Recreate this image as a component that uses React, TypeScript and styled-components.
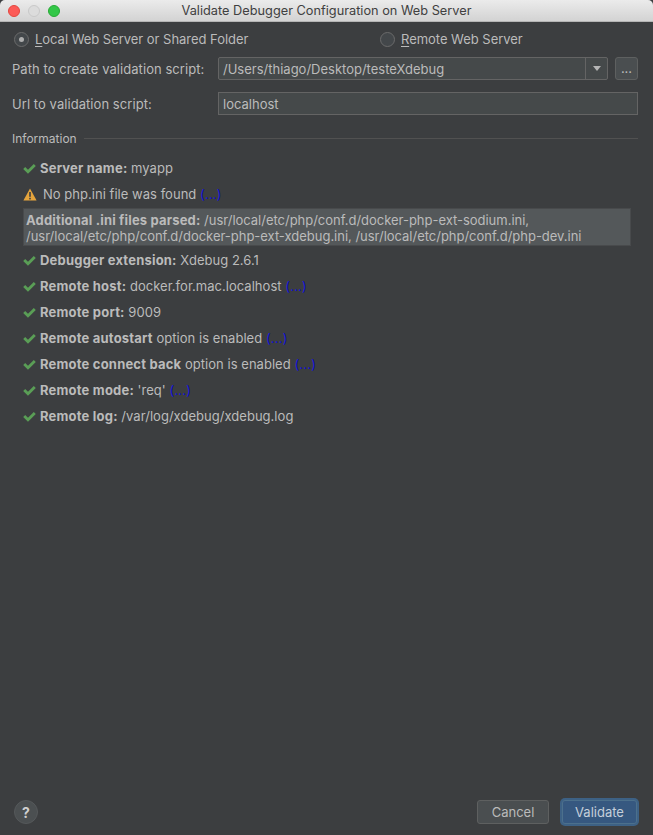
import React from "react";
import styled, { createGlobalStyle } from "styled-components";

const Global = createGlobalStyle`
  html, body { margin: 0; padding: 0; background: #3c3f41; }
  * { box-sizing: border-box; }
`;

const Window = styled.div`
  width: 653px;
  height: 835px;
  display: flex;
  flex-direction: column;
  background: #3c3e40;
  color: #bbbbbb;
  font-family: Inter, "Liberation Sans", sans-serif;
  font-size: 13px;
  overflow: hidden;
`;

const TitleBar = styled.div`
  height: 22px;
  flex: none;
  position: relative;
  display: flex;
  align-items: center;
  justify-content: center;
  background: linear-gradient(#ebebeb, #d3d3d3);
  border-bottom: 1px solid #b5b5b5;
  border-radius: 5px 5px 0 0;
  color: #404040;
  font-size: 12.75px;
`;

const Lights = styled.div`
  position: absolute;
  left: 8px;
  top: 5px;
  display: flex;
  gap: 8px;
`;

const Light = styled.span<{ $c: string; $b: string }>`
  width: 12px;
  height: 12px;
  border-radius: 50%;
  background: ${(p) => p.$c};
  border: 1px solid ${(p) => p.$b};
`;

const Content = styled.div`
  flex: 1;
  display: flex;
  flex-direction: column;
  padding: 0 15px 0 12px;
`;

const RadioRow = styled.div`
  display: grid;
  grid-template-columns: 366px 1fr;
  padding: 8px 0 0 2px;
  height: 35px;
`;

const Radio = styled.label`
  display: flex;
  align-items: center;
  gap: 6px;
  height: 18px;
  letter-spacing: -0.03px;
`;

const RadioDot = styled.span<{ $on?: boolean }>`
  width: 15px;
  height: 15px;
  border-radius: 50%;
  background: #43474a;
  border: 1px solid #6b6b6b;
  display: flex;
  align-items: center;
  justify-content: center;
  &::after {
    content: "";
    display: ${(p) => (p.$on ? "block" : "none")};
    width: 5px;
    height: 5px;
    border-radius: 50%;
    background: #aeaeae;
  }
`;

const Key = styled.span`
  text-decoration: underline;
  text-underline-offset: 2px;
`;

const FormRow = styled.div`
  display: flex;
  align-items: center;
  height: 23px;
  margin-bottom: 12px;
`;

const FormLabel = styled.div`
  width: 206px;
  flex: none;
  padding-top: 1px;
  letter-spacing: 0.06px;
`;

const Combo = styled.div`
  width: 390px;
  height: 23px;
  display: flex;
  background: #45494a;
  border: 1px solid #646464;
  border-radius: 2px;
`;

const ComboText = styled.div`
  flex: 1;
  padding-left: 4px;
  line-height: 23px;
`;

const ComboArrow = styled.div`
  width: 22px;
  border-left: 1px solid #646464;
  display: flex;
  align-items: center;
  justify-content: center;
  &::after {
    content: "";
    border-left: 4px solid transparent;
    border-right: 4px solid transparent;
    border-top: 5px solid #b5b5b5;
  }
`;

const Browse = styled.div`
  width: 23px;
  height: 23px;
  margin-left: 7px;
  background: #4a4e50;
  border: 1px solid #5e6060;
  border-radius: 3px;
  text-align: center;
  line-height: 21px;
`;

const Field = styled.div`
  width: 420px;
  height: 23px;
  background: #45494a;
  border: 1px solid #646464;
  padding-left: 4px;
  line-height: 23px;
`;

const SectionHead = styled.div`
  display: flex;
  align-items: center;
  gap: 7px;
  margin-top: 2px;
  height: 18px;
  font-size: 12px;
  &::after {
    content: "";
    flex: 1;
    height: 1px;
    background: #515151;
  }
`;

const List = styled.div`
  display: flex;
  flex-direction: column;
  padding: 8px 0 0 11px;
`;

const Item = styled.div`
  height: 26px;
  display: flex;
  align-items: center;
  white-space: pre;
  letter-spacing: 0.03px;
  b {
    letter-spacing: 0.2px;
  }
`;

const IconSlot = styled.span<{ $w: number }>`
  width: ${(p) => p.$w}px;
  flex: none;
  display: flex;
  align-items: center;
`;

const More = styled.span`
  color: #1010d8;
  letter-spacing: 0.2px;
`;

const Highlight = styled.div`
  width: 608px;
  height: 38px;
  margin: 1px 0 1px 0;
  padding: 3px 2px;
  background: #54585a;
  border: 1px solid #484a4c;
  line-height: 16px;
  white-space: pre;
  letter-spacing: -0.02px;
  b {
    letter-spacing: 0.17px;
  }
`;

const Footer = styled.div`
  margin-top: auto;
  height: 50px;
  flex: none;
  display: flex;
  align-items: center;
  padding: 4px 16px 0 14px;
`;

const Help = styled.div`
  width: 24px;
  height: 24px;
  border-radius: 50%;
  background: #4b4f51;
  border: 1px solid #55585a;
  color: #d0d0d0;
  font-weight: 700;
  font-size: 14px;
  display: flex;
  align-items: center;
  justify-content: center;
`;

const Spacer = styled.div`
  flex: 1;
`;

const Btn = styled.div<{ $primary?: boolean }>`
  height: 24px;
  display: flex;
  align-items: center;
  justify-content: center;
  border-radius: 3px;
  width: ${(p) => (p.$primary ? "75px" : "72px")};
  margin-left: ${(p) => (p.$primary ? "13px" : "0")};
  background: ${(p) => (p.$primary ? "#365880" : "#4a4e50")};
  border: 1px solid ${(p) => (p.$primary ? "#4c708c" : "#5e6060")};
  box-shadow: ${(p) => (p.$primary ? "0 0 0 2px #3d6185" : "none")};
  color: ${(p) => (p.$primary ? "#c5cfda" : "#bbbbbb")};
`;

const Check = () => (
  <svg width="13" height="11" viewBox="0 0 13 11">
    <path d="M1.2 5 L5 8.8 L11.8 2" fill="none" stroke="#5a9e56" strokeWidth="2.8" />
  </svg>
);

const Warn = () => (
  <svg width="14" height="13" viewBox="0 0 14 13">
    <path d="M7 0.5 L13.6 12.5 L0.4 12.5 Z" fill="#e5a43c" />
    <rect x="6.2" y="4" width="1.6" height="4.8" fill="#3c3f41" />
    <rect x="6.2" y="9.8" width="1.6" height="1.6" fill="#3c3f41" />
  </svg>
);

const OkItem = ({ children }: { children: React.ReactNode }) => (
  <Item>
    <IconSlot $w={17}><Check /></IconSlot>
    <span>{children}</span>
  </Item>
);

export default function App() {
  return (
    <Window>
      <Global />
      <TitleBar>
        <Lights>
          <Light $c="#fc5b57" $b="#e3473f" />
          <Light $c="#dcdcdc" $b="#c9c9c9" />
          <Light $c="#33c748" $b="#27aa35" />
        </Lights>
        Validate Debugger Configuration on Web Server
      </TitleBar>
      <Content>
        <RadioRow>
          <Radio><RadioDot $on /><span><Key>L</Key>ocal Web Server or Shared Folder</span></Radio>
          <Radio><RadioDot /><span><Key>R</Key>emote Web Server</span></Radio>
        </RadioRow>
        <FormRow>
          <FormLabel>Path to create validation script:</FormLabel>
          <Combo>
            <ComboText>/Users/thiago/Desktop/testeXdebug</ComboText>
            <ComboArrow />
          </Combo>
          <Browse>...</Browse>
        </FormRow>
        <FormRow>
          <FormLabel>Url to validation script:</FormLabel>
          <Field>localhost</Field>
        </FormRow>
        <SectionHead>Information</SectionHead>
        <List>
          <OkItem><b>Server name:</b> myapp</OkItem>
          <Item>
            <IconSlot $w={20}><Warn /></IconSlot>
            <span>No php.ini file was found <More>(...)</More></span>
          </Item>
          <Highlight>
            <b>Additional .ini files parsed:</b> /usr/local/etc/php/conf.d/docker-php-ext-sodium.ini,{"\n"}/usr/local/etc/php/conf.d/docker-php-ext-xdebug.ini, /usr/local/etc/php/conf.d/php-dev.ini
          </Highlight>
          <OkItem><b>Debugger extension:</b> Xdebug 2.6.1</OkItem>
          <OkItem><b>Remote host:</b> docker.for.mac.localhost <More>(...)</More></OkItem>
          <OkItem><b>Remote port:</b> 9009</OkItem>
          <OkItem><b>Remote autostart</b> option is enabled <More>(...)</More></OkItem>
          <OkItem><b>Remote connect back</b> option is enabled <More>(...)</More></OkItem>
          <OkItem><b>Remote mode:</b> 'req' <More>(...)</More></OkItem>
          <OkItem><b>Remote log:</b> /var/log/xdebug/xdebug.log</OkItem>
        </List>
      </Content>
      <Footer>
        <Help>?</Help>
        <Spacer />
        <Btn>Cancel</Btn>
        <Btn $primary>Validate</Btn>
      </Footer>
    </Window>
  );
}
